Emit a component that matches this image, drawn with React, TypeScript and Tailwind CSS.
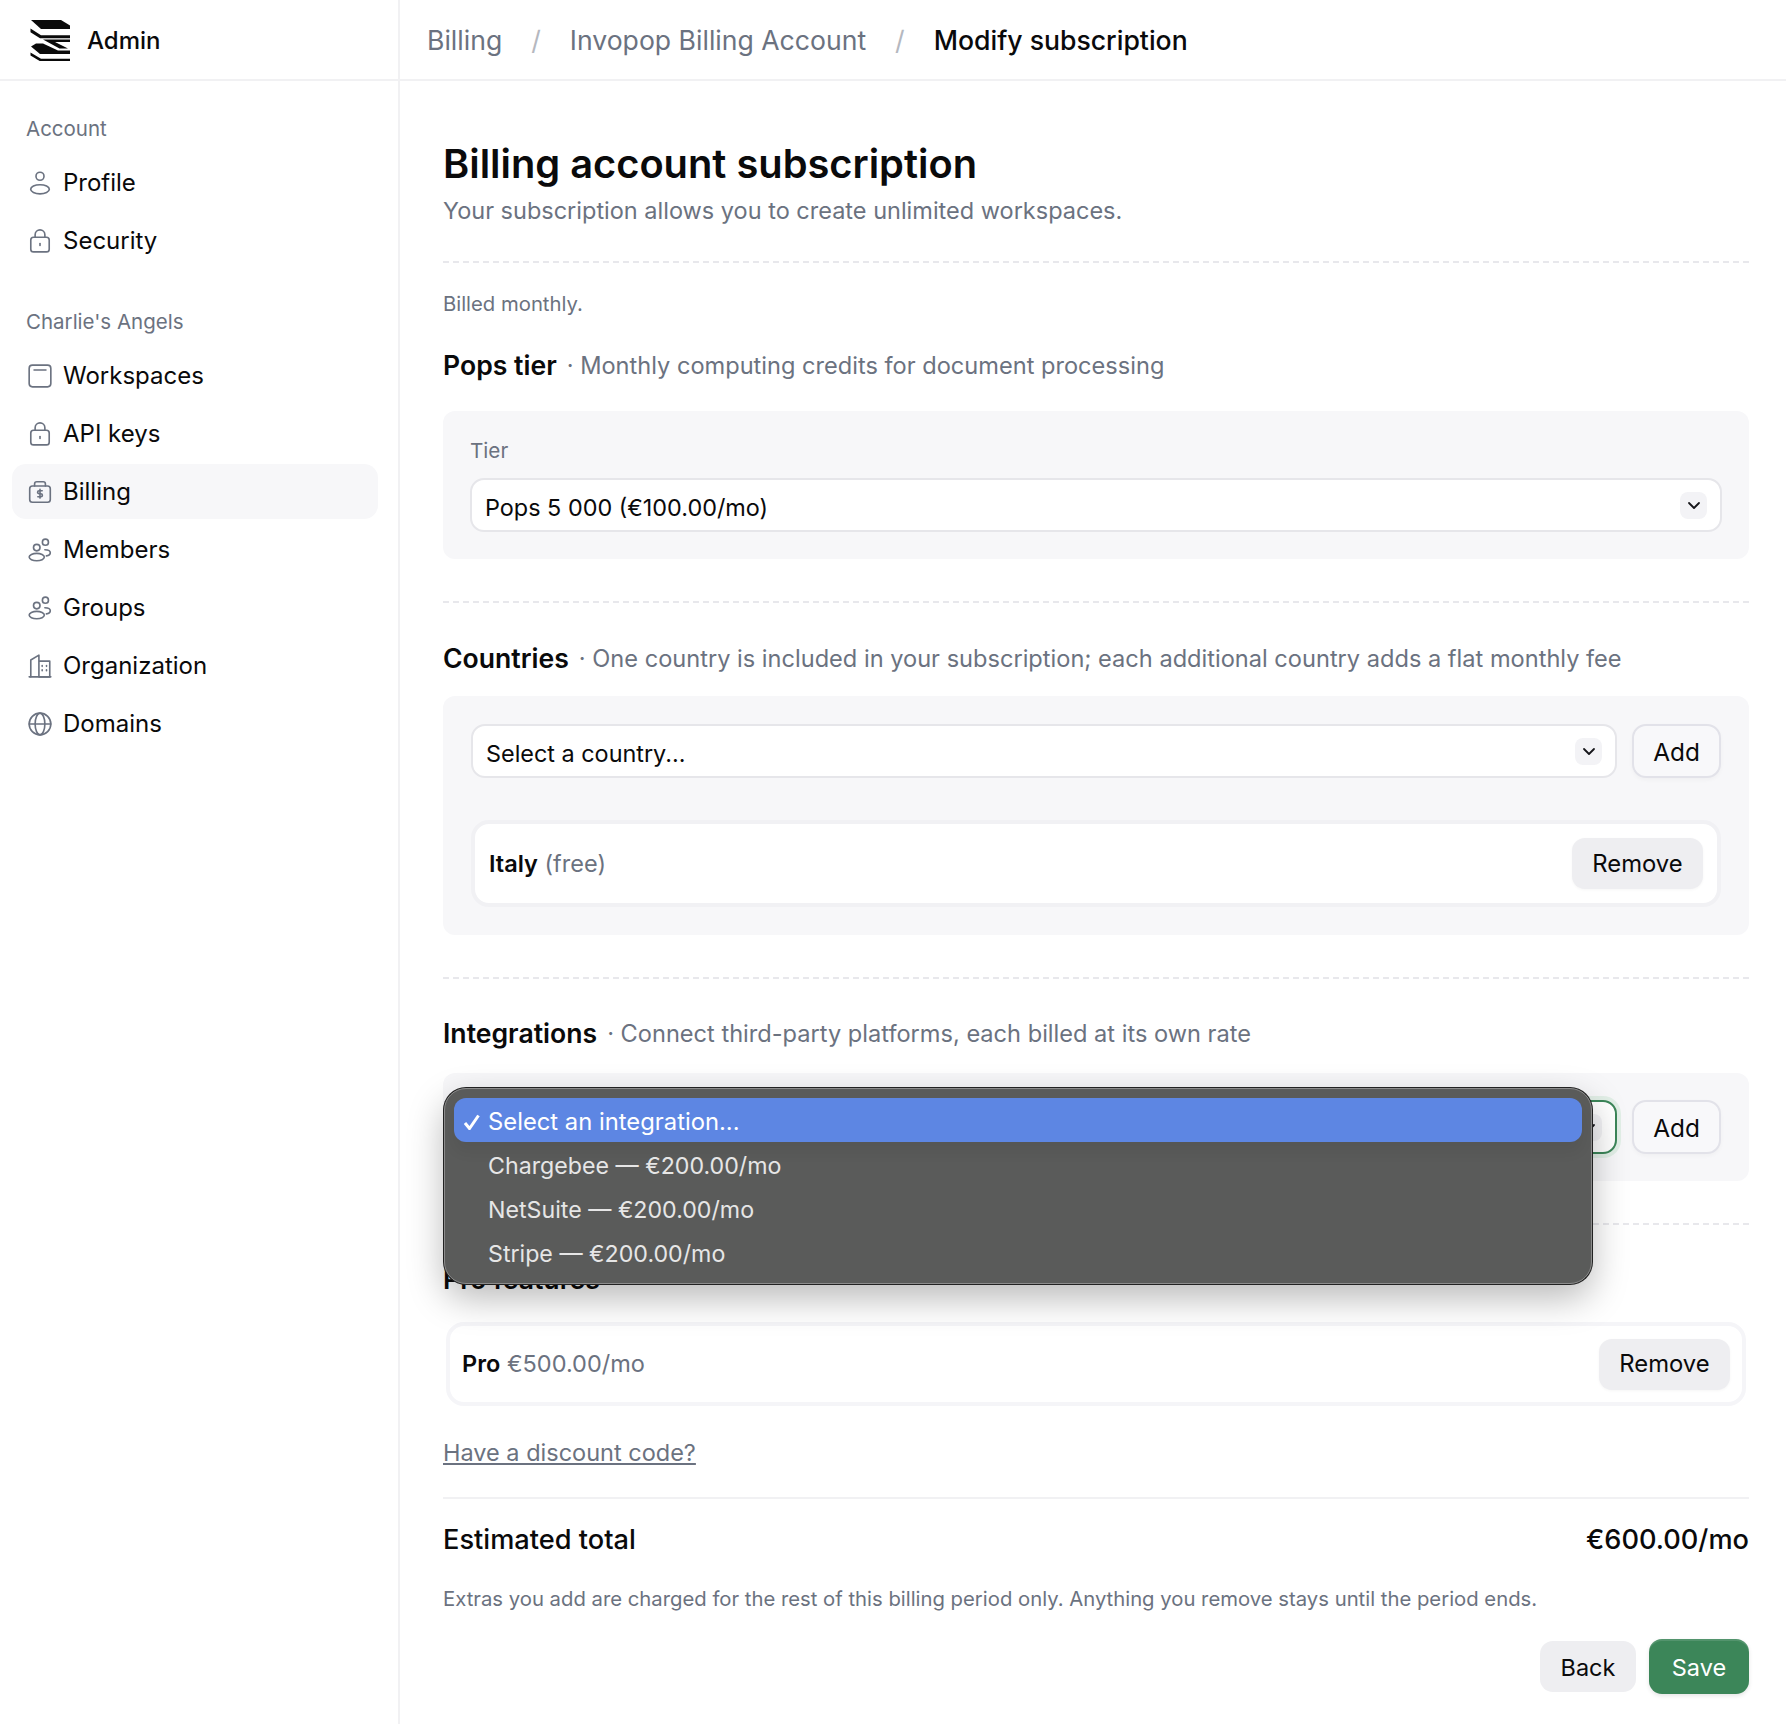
/* Modify subscription page with the native select popup open. */

const font = { fontFamily: "Inter, 'Noto Sans', sans-serif" };

function Ico({ children }: { children: React.ReactNode }) {
  return (
    <svg viewBox="0 0 24 24" fill="none" stroke="#6b7280" strokeWidth="1.5" strokeLinecap="round" strokeLinejoin="round" className="h-[26px] w-[26px] shrink-0">
      {children}
    </svg>
  );
}

const Person = () => (
  <Ico>
    <circle cx="12" cy="5.8" r="3.7" />
    <ellipse cx="12" cy="17.8" rx="8.6" ry="4.2" />
  </Ico>
);
const Lock = () => (
  <Ico>
    <rect x="3.5" y="8.5" width="17" height="13.5" rx="2.5" />
    <path d="M7.5 8.5V6.2a4.5 4.5 0 0 1 9 0v2.3" />
    <path d="M12 14.4v1.8" />
  </Ico>
);
const Workspace = () => (
  <Ico>
    <rect x="2" y="2" width="20" height="20" rx="3" />
    <path d="M6.5 6.5h11" />
  </Ico>
);
const Billing = () => (
  <Ico>
    <rect x="2.5" y="6.5" width="19" height="15" rx="2.5" />
    <path d="M7 6.5V4.5a2 2 0 0 1 2-2h6a2 2 0 0 1 2 2v2" />
    <path d="M14 10.8h-2.8a1.4 1.4 0 0 0 0 2.8h1.6a1.4 1.4 0 0 1 0 2.8H10M12 9.6v8" />
  </Ico>
);
const People = () => (
  <Ico>
    <circle cx="9" cy="9.8" r="3" />
    <circle cx="17" cy="4.8" r="2.8" />
    <ellipse cx="9" cy="18.5" rx="7" ry="3.4" />
    <path d="M16.5 11.8c3 0 5 1.2 5 2.8s-1.6 2.6-3.6 2.8" />
  </Ico>
);
const Building = () => (
  <Ico>
    <path d="M2 22h20" />
    <path d="M3.5 22V6.5L11 2v5" />
    <rect x="11" y="7.5" width="10" height="14.5" />
    <path d="M14 11.5v.8M18 11.5v.8M14 15.5v.8M18 15.5v.8" />
  </Ico>
);
const Globe = () => (
  <Ico>
    <circle cx="12" cy="12" r="10" />
    <ellipse cx="12" cy="12" rx="4.5" ry="10" />
    <path d="M2 12h20" />
  </Ico>
);

const Logo = () => (
  <svg viewBox="30 18 41 42" className="h-[42px] w-[41px] shrink-0" fill="#0a0a0a">
    <path d="M31 19h30l9 5.5V28H41z" />
    <path d="M30.5 27.5l10.5 6.7h29v3H40l-9.5-6z" />
    <path d="M43 38.5h27v2.5H55l13 6.5h-8.5z" />
    <path d="M31 45.5l5-3h7l15 7h12V53H40z" />
    <path d="M30.5 51.5l10.5 6.2h29v2.5H40l-9.5-5.8z" />
  </svg>
);

function NavItem({ icon, label, active }: { icon: React.ReactNode; label: string; active?: boolean }) {
  return (
    <div className={`flex h-[55px] items-center gap-[10px] rounded-[14px] pl-[15px] text-[24px] text-[#0a0a0b] ${active ? "bg-[#f7f7f9]" : ""}`}>
      {icon}
      <span>{label}</span>
    </div>
  );
}

function Chevron() {
  return (
    <span className="flex h-[27px] w-[27px] items-center justify-center rounded-[8px] bg-[#f3f3f6]">
      <svg viewBox="0 0 16 16" className="h-[16px] w-[16px]" fill="none" stroke="#16161a" strokeWidth="1.8" strokeLinecap="round" strokeLinejoin="round">
        <path d="M3 6l5 5 5-5" />
      </svg>
    </span>
  );
}

function Select({ label, focus }: { label: string; focus?: boolean }) {
  return (
    <div className={`flex h-[54px] flex-1 items-center justify-between rounded-[14px] border-2 bg-white pl-[13px] pr-[13px] text-[23.4px] text-[#0a0a0b] ${focus ? "border-[#3c8659] shadow-[0_0_0_4px_#e2efe7]" : "border-[#e6e6ea]"}`}>
      <span className="pt-[6px]">{label}</span>
      <Chevron />
    </div>
  );
}

function AddButton() {
  return (
    <div className="flex h-[54px] w-[89px] shrink-0 items-center justify-center rounded-[14px] border-2 border-[#e2e2e9] bg-[#f8f8fa] pt-[2px] text-[24.4px] text-[#0a0a0b] shadow-[0_2px_4px_rgba(0,0,0,0.03)]">
      Add
    </div>
  );
}

function Row({ children, compact }: { children: React.ReactNode; compact?: boolean }) {
  return (
    <div className={`flex items-center justify-between rounded-[18px] border-[4px] bg-white ${compact ? "h-[84px] border-[#f5f5f8] pl-[12px] pr-[12px]" : "h-[87px] border-[#f1f1f4] pl-[14px] pr-[14px]"}`}>
      <div className="text-[23.5px] text-[#6b7280]">{children}</div>
      <div className="flex h-[51px] w-[131px] items-center justify-center rounded-[13px] bg-[#eeeef1] text-[23.8px] text-[#0a0a0b] shadow-[0_1px_3px_rgba(0,0,0,0.04)]">Remove</div>
    </div>
  );
}

function Heading({ title, note }: { title: string; note?: string }) {
  return (
    <div className="flex h-[34px] items-center">
      <span className="text-[26.6px] font-semibold text-[#0a0a0b]">{title}</span>
      {note && <span className="ml-[10px] text-[23.6px] text-[#6b7280]">· {note}</span>}
    </div>
  );
}

const Dash = ({ className }: { className: string }) => <div className={`border-t-2 border-dashed border-[#e8e8ec] ${className}`} />;

export default function App() {
  return (
    <div style={font} className="relative flex h-[1724px] w-[1786px] overflow-hidden bg-white">
      <aside className="w-[400px] shrink-0 border-r-2 border-[#f1f1f3]">
        <div className="flex h-[81px] items-center gap-[16px] border-b-2 border-[#f1f1f3] pl-[30px]">
          <Logo />
          <span className="pt-[2px] text-[24px] font-medium text-[#0a0a0b]">Admin</span>
        </div>
        <div className="pl-[12px] pr-[20px] pt-[32px]">
          <div className="flex h-[32px] items-center pl-[14px] text-[20.5px] text-[#6b7280]">Account</div>
          <div className="mt-[10px] flex flex-col gap-[3px]">
            <NavItem icon={<Person />} label="Profile" />
            <NavItem icon={<Lock />} label="Security" />
          </div>
          <div className="mt-[38px] flex h-[32px] items-center pl-[14px] text-[20.5px] text-[#6b7280]">Charlie's Angels</div>
          <div className="mt-[10px] flex flex-col gap-[3px]">
            <NavItem icon={<Workspace />} label="Workspaces" />
            <NavItem icon={<Lock />} label="API keys" />
            <NavItem icon={<Billing />} label="Billing" active />
            <NavItem icon={<People />} label="Members" />
            <NavItem icon={<People />} label="Groups" />
            <NavItem icon={<Building />} label="Organization" />
            <NavItem icon={<Globe />} label="Domains" />
          </div>
        </div>
      </aside>

      <main className="relative flex-1">
        <div className="flex h-[81px] items-center border-b-2 border-[#f1f1f3] pl-[27px] pt-[3px] text-[26.6px]">
          <span className="text-[#6b7280]">Billing</span>
          <span className="mx-[29px] text-[#b5b8bf]">/</span>
          <span className="text-[#6b7280]">Invopop Billing Account</span>
          <span className="mx-[29px] text-[#b5b8bf]">/</span>
          <span className="font-medium text-[#0a0a0b]">Modify subscription</span>
        </div>

        <div className="pl-[43px] pr-[37px]">
          <h1 className="mt-[60px] text-[39.8px] font-semibold leading-[46px] text-[#0a0a0b]">Billing account subscription</h1>
          <p className="mt-[7px] text-[23.5px] leading-[34px] text-[#6b7280]">Your subscription allows you to create unlimited workspaces.</p>
          <Dash className="mt-[33px]" />
          <p className="mt-[28px] text-[20.3px] leading-[26px] text-[#6b7280]">Billed monthly.</p>

          <div className="mt-[32px]">
            <Heading title="Pops tier" note="Monthly computing credits for document processing" />
          </div>
          <div className="mt-[28px] h-[148px] rounded-[12px] bg-[#f7f7f9] px-[27px] pt-[25px]">
            <div className="h-[30px] text-[20.7px] leading-[30px] text-[#6b7280]">Tier</div>
            <div className="mt-[12px] flex">
              <Select label="Pops 5 000 (€100.00/mo)" />
            </div>
          </div>
          <Dash className="mt-[42px]" />

          <div className="mt-[39px]">
            <Heading title="Countries" note="One country is included in your subscription; each additional country adds a flat monthly fee" />
          </div>
          <div className="mt-[20px] h-[239px] rounded-[12px] bg-[#f7f7f9] px-[28px] pt-[28px]">
            <div className="flex gap-[15px]">
              <Select label="Select a country..." />
              <AddButton />
            </div>
            <div className="mt-[42px]">
              <Row>
                <b className="font-semibold text-[#0a0a0b]">Italy</b> (free)
              </Row>
            </div>
          </div>
          <Dash className="mt-[42px]" />

          <div className="mt-[38px]">
            <Heading title="Integrations" note="Connect third-party platforms, each billed at its own rate" />
          </div>
          <div className="mt-[22px] h-[108px] rounded-[12px] bg-[#f7f7f9] px-[28px] pt-[27px]">
            <div className="flex gap-[15px]">
              <Select label="Select an integration..." focus />
              <AddButton />
            </div>
          </div>
          <Dash className="mt-[42px]" />

          <div className="mt-[38px]">
            <Heading title="Pro features" />
          </div>
          <div className="mt-[25px] px-[3px]">
            <Row compact>
              <b className="font-semibold text-[#0a0a0b]">Pro</b> €500.00/mo
            </Row>
          </div>

          <p className="mt-[31px] text-[23.5px] leading-[32px] text-[#6b7280] underline underline-offset-2">Have a discount code?</p>
          <div className="mt-[28px] border-t-2 border-[#f1f1f3]" />
          <div className="mt-[23px] flex items-center justify-between text-[27.2px] font-medium leading-[36px] text-[#0a0a0b]">
            <span>Estimated total</span>
            <span>€600.00/mo</span>
          </div>
          <p className="mt-[27px] text-[20.3px] leading-[28px] text-[#6b7280]">Extras you add are charged for the rest of this billing period only. Anything you remove stays until the period ends.</p>
          <div className="mt-[26px] flex justify-end gap-[13px]">
            <div className="mt-[2px] flex h-[51px] w-[96px] items-center justify-center rounded-[13px] bg-[#eeeef1] pt-[2px] text-[23.5px] text-[#0a0a0b]">Back</div>
            <div className="flex h-[55px] w-[100px] items-center justify-center rounded-[13px] bg-[#3c8659] pt-[2px] text-[23.5px] text-white shadow-[inset_0_2px_0_rgba(255,255,255,0.12),0_2px_4px_rgba(0,0,0,0.1)]">Save</div>
          </div>
        </div>

        {/* open native select popup */}
        <div className="absolute left-[44px] top-[1088px] h-[196px] w-[1148px] rounded-[22px] border border-[#8c8c8c] bg-[#5a5b5a] px-[9px] pt-[9px] text-[23.2px] text-[#e6e6e6] shadow-[0_0_0_1px_#222,0_14px_36px_rgba(0,0,0,0.28)]">
          <div className="flex h-[44px] items-center rounded-[12px] bg-[#5d86e3] pl-[10px] pt-[4px] text-[23.8px] text-white shadow-[0_10px_14px_rgba(0,0,0,0.06)]">
            <svg viewBox="0 0 16 16" className="mr-[8px] h-[16px] w-[16px] shrink-0" fill="none" stroke="#fff" strokeWidth="3">
              <path d="M1 9l4.5 5.5L14.5 1.5" />
            </svg>
            <span>Select an integration...</span>
          </div>
          <div className="flex h-[44px] items-center pl-[34px] pt-[4px]">Chargebee — €200.00/mo</div>
          <div className="flex h-[44px] items-center pl-[34px] pt-[4px]">NetSuite — €200.00/mo</div>
          <div className="flex h-[44px] items-center pl-[34px] pt-[4px]">Stripe — €200.00/mo</div>
        </div>
      </main>
    </div>
  );
}
